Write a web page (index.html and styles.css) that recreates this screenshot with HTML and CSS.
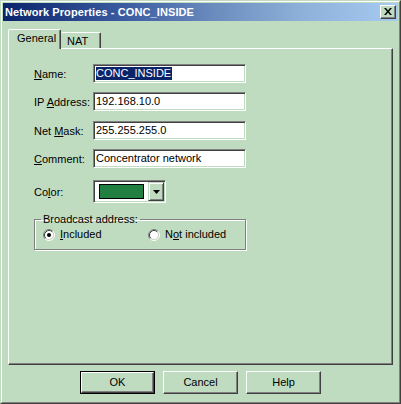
FILE: index.html
```html
<!DOCTYPE html>
<html>
<head>
<meta charset="utf-8">
<link rel="stylesheet" href="styles.css">
</head>
<body>
<div class="window">
  <div class="frame">
    <div class="titlebar">
      <span class="title">Network Properties - CONC_INSIDE</span>
      <div class="close">
        <svg width="8" height="7" viewBox="0 0 8 7"><path d="M0 0h2l2 2.5 2-2.5h2l-3 3.5 3 3.5h-2l-2-2.5-2 2.5h-2l3-3.5z" fill="#000"/></svg>
      </div>
    </div>
    <div class="body">
      <div class="tabs">
        <div class="tab active">General</div>
        <div class="tab">NAT</div>
      </div>
      <div class="panel">
        <div class="form">
          <div class="row r1"><span class="lbl"><u>N</u>ame:</span><div class="edit"><span class="sel">CONC_INSIDE</span></div></div>
          <div class="row r2"><span class="lbl">IP <u>A</u>ddress:</span><div class="edit">192.168.10.0</div></div>
          <div class="row r3"><span class="lbl">Net <u>M</u>ask:</span><div class="edit">255.255.255.0</div></div>
          <div class="row r4"><span class="lbl"><u>C</u>omment:</span><div class="edit">Concentrator network</div></div>
          <div class="row r5"><span class="lbl">Co<u>l</u>or:</span>
            <div class="combo">
              <div class="swatch-area"><div class="swatch"></div></div>
              <div class="drop"><svg width="7" height="4" viewBox="0 0 7 4"><path d="M0 0h7L3.5 4z" fill="#000"/></svg></div>
            </div>
          </div>
          <fieldset class="group">
            <legend>Broadcast address:</legend>
            <div class="radios">
              <div class="opt first">
                <svg class="radio" width="12" height="12" viewBox="0 0 12 12">
                  <circle cx="6" cy="6" r="4.5" fill="#fff"/>
                  <path d="M2.11 9.89A5.5 5.5 0 0 1 9.89 2.11" fill="none" stroke="#808080"/>
                  <path d="M9.89 2.11A5.5 5.5 0 0 1 2.11 9.89" fill="none" stroke="#fff"/>
                  <path d="M2.82 9.18A4.5 4.5 0 0 1 9.18 2.82" fill="none" stroke="#404040"/>
                  <path d="M9.18 2.82A4.5 4.5 0 0 1 2.82 9.18" fill="none" stroke="#d4d0c8"/>
                  <circle cx="6" cy="6" r="2" fill="#000"/>
                </svg>
                <span><u>I</u>ncluded</span>
              </div>
              <div class="opt">
                <svg class="radio" width="12" height="12" viewBox="0 0 12 12">
                  <circle cx="6" cy="6" r="4.5" fill="#fff"/>
                  <path d="M2.11 9.89A5.5 5.5 0 0 1 9.89 2.11" fill="none" stroke="#808080"/>
                  <path d="M9.89 2.11A5.5 5.5 0 0 1 2.11 9.89" fill="none" stroke="#fff"/>
                  <path d="M2.82 9.18A4.5 4.5 0 0 1 9.18 2.82" fill="none" stroke="#404040"/>
                  <path d="M9.18 2.82A4.5 4.5 0 0 1 2.82 9.18" fill="none" stroke="#d4d0c8"/>
                </svg>
                <span>N<u>o</u>t included</span>
              </div>
            </div>
          </fieldset>
        </div>
      </div>
      <div class="buttons">
        <div class="btn default"><div class="btn-in">OK</div></div>
        <div class="btn"><div class="btn-in">Cancel</div></div>
        <div class="btn"><div class="btn-in">Help</div></div>
      </div>
    </div>
  </div>
</div>
</body>
</html>
```
FILE: styles.css
```css
html, body {
  margin: 0;
  padding: 0;
  background: #c0dcc0;
}
body {
  font-family: "Liberation Sans", Arial, sans-serif;
  font-size: 11px;
  color: #000;
}
.window {
  width: 401px;
  height: 404px;
  box-sizing: border-box;
  border: 1px solid;
  border-color: #c0dcc0 #404040 #404040 #c0dcc0;
  background: #c0dcc0;
}
.frame {
  height: 100%;
  box-sizing: border-box;
  border: 1px solid;
  border-color: #fff #808080 #808080 #fff;
  padding: 1px;
  display: flex;
  flex-direction: column;
}
.titlebar {
  height: 18px;
  flex: none;
  display: flex;
  align-items: center;
  justify-content: space-between;
  padding-left: 2px;
  background: linear-gradient(to right, #0a246a 0%, #3a5aa0 30%, #6d8fc0 55%, #8cb0d8 75%, #a6caf0 100%);
  color: #fff;
  font-weight: bold;
  font-size: 11px;
}
.title {
  line-height: 13px;
  letter-spacing: 0.1px;
}
.close {
  width: 16px;
  height: 14px;
  box-sizing: border-box;
  margin-right: 2px;
  background: #c0dcc0;
  border: 1px solid;
  border-color: #fff #404040 #404040 #fff;
  box-shadow: inset -1px -1px #808080;
  display: flex;
  align-items: center;
  justify-content: center;
  padding-bottom: 1px;
}
.close svg { display: block; }
.body {
  flex: 1;
  display: flex;
  flex-direction: column;
  padding: 0 5px;
}
.tabs {
  margin-top: 8px;
  display: flex;
  align-items: flex-end;
  height: 19px;
}
.tab {
  position: relative;
  box-sizing: border-box;
  background: #c0dcc0;
  border: 1px solid;
  border-bottom: none;
  border-color: #fff #404040 transparent #fff;
  box-shadow: inset -1px 0 #808080;
  border-radius: 2px 2px 0 0;
  line-height: 13px;
}
.tab.active {
  z-index: 2;
  width: 53px;
  height: 20px;
  margin-bottom: -1px;
  padding: 2px 0 0 8px;
}
.tab:not(.active) {
  width: 40px;
  height: 16px;
  padding: 2px 0 0 6px;
  border-left: none;
}
.panel {
  position: relative;
  z-index: 1;
  height: 317px;
  box-sizing: border-box;
  border: 1px solid;
  border-color: #fff #404040 #404040 #fff;
  box-shadow: inset -1px -1px #808080;
}
.form {
  padding: 15px 0 0 25px;
  display: flex;
  flex-direction: column;
}
.row {
  display: flex;
  align-items: center;
  height: 19px;
}
.r2 { margin-top: 9px; }
.r3 { margin-top: 10px; }
.r4 { margin-top: 9px; }
.r5 { margin-top: 12px; height: 23px; }
.lbl {
  width: 59px;
  flex: none;
  white-space: nowrap;
}
.edit {
  width: 153px;
  height: 19px;
  box-sizing: border-box;
  background: #fff;
  border: 1px solid;
  border-color: #808080 #fff #fff #808080;
  box-shadow: inset 1px 1px #404040, inset -1px -1px #c0dcc0;
  padding: 2px 0 0 2px;
  line-height: 13px;
  white-space: nowrap;
  overflow: hidden;
}
.sel {
  background: #0a246a;
  color: #fff;
  display: inline-block;
  padding-right: 1px;
}
.combo {
  width: 73px;
  height: 23px;
  box-sizing: border-box;
  background: #fff;
  border: 1px solid;
  border-color: #808080 #fff #fff #808080;
  box-shadow: inset 1px 1px #404040, inset -1px -1px #c0dcc0;
  padding: 1px;
  display: flex;
}
.swatch-area {
  flex: 1;
  padding: 2px 0 0 4px;
}
.swatch {
  width: 45px;
  height: 15px;
  box-sizing: border-box;
  border: 1px solid #000;
  background: #218041;
}
.drop {
  width: 16px;
  box-sizing: border-box;
  background: #c0dcc0;
  border: 1px solid;
  border-color: #c0dcc0 #404040 #404040 #c0dcc0;
  box-shadow: inset 1px 1px #fff, inset -1px -1px #808080;
  display: flex;
  align-items: center;
  justify-content: center;
}
.drop svg { display: block; }
.group {
  margin: 10px 0 0 0;
  padding: 2px 0 8px 8px;
  width: 212px;
  box-sizing: border-box;
  min-inline-size: 0;
  border: 1px solid #808080;
  box-shadow: inset 1px 1px #fff, 1px 1px #fff;
}
.group legend {
  padding: 0 2px;
  margin-left: -2px;
  line-height: 13px;
}
.radios {
  display: flex;
  align-items: center;
}
.opt {
  display: flex;
  align-items: center;
  gap: 5px;
  line-height: 13px;
}
.opt.first { width: 105px; }
.radio { display: block; flex: none; }
.buttons {
  margin-top: 6px;
  display: flex;
  justify-content: center;
  gap: 8px;
}
.btn {
  width: 75px;
  height: 23px;
  box-sizing: border-box;
  border: 1px solid;
  border-color: #fff #404040 #404040 #fff;
  box-shadow: inset -1px -1px #808080;
  background: #c0dcc0;
}
.btn.default {
  border: 1px solid #000;
  box-shadow: none;
}
.btn-in {
  height: 100%;
  box-sizing: border-box;
  display: flex;
  align-items: center;
  justify-content: center;
  line-height: 13px;
}
.btn.default .btn-in {
  border: 1px solid;
  border-color: #fff #404040 #404040 #fff;
  box-shadow: inset -1px -1px #808080;
}
```
